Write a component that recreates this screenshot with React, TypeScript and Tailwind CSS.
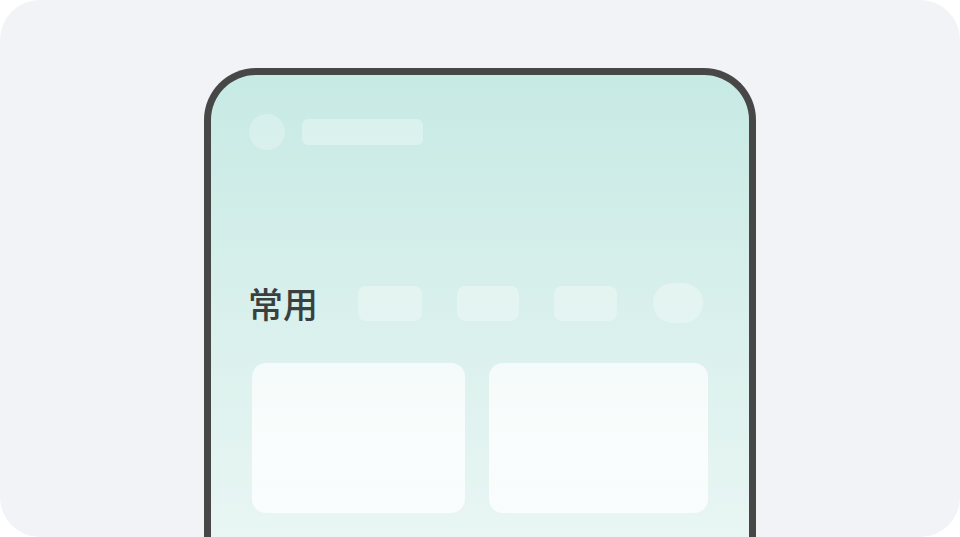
export default function App() {
  return (
    <div className="h-[537px] w-[960px] bg-white">
      <div className="h-[537px] w-[960px] overflow-hidden rounded-[40px] bg-[#f2f3f7] pl-[204px] pt-[68px]">
        <div className="h-[480px] w-[552px] rounded-t-[52px] border-[7px] border-b-0 border-[#474747] bg-gradient-to-b from-[#c7eae4] via-[#d9f0ec] to-[#e9f6f4] pl-[38px] pr-[32px] pt-[39px]">
          <div className="flex items-center gap-[17px]">
            <div className="h-9 w-9 rounded-full bg-white/25" />
            <div className="h-[26px] w-[121px] rounded-[6px] bg-white/30" />
          </div>

          <div className="mt-[133px] flex items-center">
            <span
              className="-ml-[1px] w-[110px] text-[35px] font-medium leading-[40px] text-[#3a4040]"
              style={{ fontFamily: '"Noto Sans CJK SC", "Noto Sans", sans-serif' }}
            >
              常用
            </span>
            <div className="h-[35px] w-[64px] rounded-[8px] bg-white/30" />
            <div className="ml-[35px] h-[35px] w-[62px] rounded-[8px] bg-white/30" />
            <div className="ml-[35px] h-[35px] w-[63px] rounded-[8px] bg-white/30" />
            <div className="ml-[36px] h-[40px] w-[50px] rounded-full bg-white/30" />
          </div>

          <div className="mt-[40px] flex gap-[24px] pl-[3px]">
            <div className="h-[150px] w-[213px] rounded-[14px] bg-gradient-to-b from-white/70 via-white/80 to-white/75" />
            <div className="h-[150px] w-[219px] rounded-[14px] bg-gradient-to-b from-white/70 via-white/80 to-white/75" />
          </div>
        </div>
      </div>
    </div>
  );
}
